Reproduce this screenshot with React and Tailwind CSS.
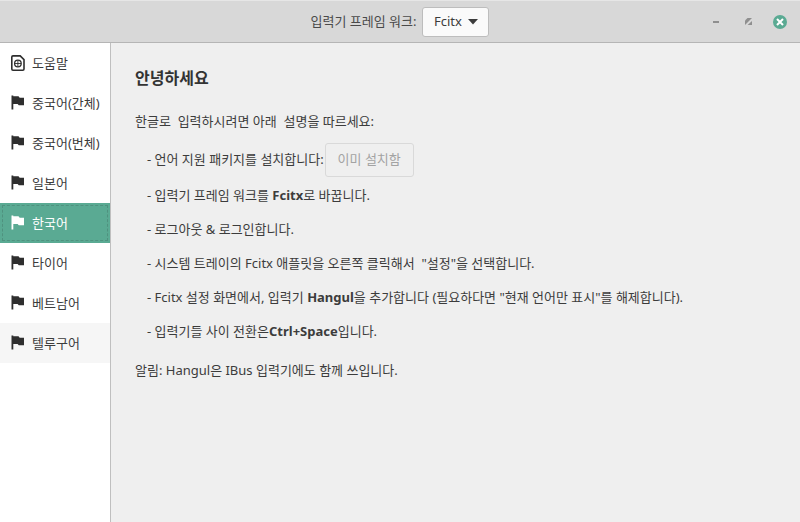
import React from "react";

const Flag = ({ color = "#2e2e2e" }) => (
  <svg width="14" height="16" viewBox="0 0 14 16" className="shrink-0">
    <path d="M0.5 0.5h1.8v0.8h5.2l1.2 1.4h4.3v7.6H7.8l-1.2-1.4H2.3V14.5H0.5z" fill={color} />
  </svg>
);

const Help = () => (
  <svg width="14" height="16" viewBox="0 0 14 16" className="shrink-0">
    <path d="M2 0.9h7.2L13 4.6V14a1.2 1.2 0 0 1-1.2 1.2H2A1.2 1.2 0 0 1 .8 14V2.1A1.2 1.2 0 0 1 2 .9z" fill="none" stroke="#2e2e2e" strokeWidth="1.6" />
    <circle cx="6.9" cy="8.5" r="3.3" fill="none" stroke="#2e2e2e" strokeWidth="1.3" />
    <path d="M3.8 8.5h6.2M6.9 5.4v6.2" stroke="#2e2e2e" strokeWidth="0.9" />
  </svg>
);

const rows = ["중국어(간체)", "중국어(번체)", "일본어", "한국어", "타이어", "베트남어", "텔루구어"];

const Row = ({ label, icon, state }) => (
  <div
    className={
      "h-10 flex items-center gap-[7px] pl-[11px] text-[13px] relative " +
      (state === "sel" ? "bg-[#5aaa93] text-white" : state === "hover" ? "bg-[#f6f6f6] text-[#3c3c3c]" : "text-[#3c3c3c]")
    }
  >
    {icon}
    <span className="relative top-[1px]">{label}</span>
    {state === "sel" && <div className="absolute inset-[2px] border border-dashed border-[#4f927f]" />}
  </div>
);

const Line = ({ children, className = "" }) => (
  <div className={"pl-3 h-[34px] flex items-center whitespace-pre " + className}>{children}</div>
);

export default function App() {
  return (
    <div
      className="w-[800px] h-[522px] flex flex-col bg-[#efefef] text-[#3c3c3c] overflow-hidden"
      style={{ fontFamily: '"Noto Sans", "Noto Sans CJK KR", sans-serif' }}
    >
      <header className="h-[43px] shrink-0 bg-[#d8d8d8] border-b border-[#b5b5b5] border-t-[#e6e6e6] border-t flex items-center relative text-[13px]">
        <div className="flex-1 flex items-center justify-center gap-[6px] pt-[1px]">
          <span className="text-[#4a4a4a]">입력기 프레임 워크:</span>
          <div className="w-[67px] h-[30px] bg-[#fafafa] border border-[#bdbdbd] rounded-[3px] flex items-center justify-center gap-[6px]">
            <span>Fcitx</span>
            <svg width="10" height="6" viewBox="0 0 10 6"><path d="M0 0h10L5 5.5z" fill="#3c3c3c" /></svg>
          </div>
        </div>
        <div className="absolute right-[13px] top-0 h-full flex items-center">
          <div className="w-[6px] h-[2px] bg-[#8f8f8f]" />
          <svg width="7" height="7" viewBox="0 0 7 7" className="ml-[26px] mr-[21px]"><path d="M0 2.5 2.5 0H7L0 7z" fill="#8f8f8f" /><path d="M7 3v4H2.6z" fill="#8f8f8f" /></svg>
          <div className="w-[14px] h-[14px] rounded-full bg-[#5aaa93] flex items-center justify-center">
            <svg width="8" height="8" viewBox="0 0 8 8"><path d="M1 1l6 6M7 1 1 7" stroke="#fff" strokeWidth="2" /></svg>
          </div>
        </div>
      </header>
      <div className="flex-1 flex min-h-0">
        <aside className="w-[111px] shrink-0 bg-white border-r border-[#bfbfbf]">
          <Row label="도움말" icon={<Help />} />
          {rows.map((r) => (
            <Row
              key={r}
              label={r}
              icon={<Flag color={r === "한국어" ? "#ffffff" : "#2e2e2e"} />}
              state={r === "한국어" ? "sel" : r === "텔루구어" ? "hover" : undefined}
            />
          ))}
        </aside>
        <main className="flex-1 pl-6 pt-[22px] text-[13px]">
          <h1 className="text-[16px] font-bold h-[26px] leading-[26px] text-[#333]">안녕하세요</h1>
          <p className="mt-[20px] h-[20px] leading-[20px] whitespace-pre">한글로  입력하시려면 아래  설명을 따르세요:</p>
          <Line className="mt-[12px] gap-[1px]">
            <span>- 언어 지원 패키지를 설치합니다:</span>
            <div className="w-[89px] h-[34px] rounded-[3px] border border-[#d9d9d9] flex items-center justify-center text-[#a3a3a3]">이미 설치함</div>
          </Line>
          <Line className="mt-[2px]"><span>- 입력기 프레임 워크를 <b>Fcitx</b>로 바꿉니다.</span></Line>
          <Line>- 로그아웃 &amp; 로그인합니다.</Line>
          <Line>- 시스템 트레이의 Fcitx 애플릿을 오른쪽 클릭해서  "설정"을 선택합니다.</Line>
          <Line><span>- Fcitx 설정 화면에서, 입력기 <b>Hangul</b>을 추가합니다 (필요하다면 "현재 언어만 표시"를 해제합니다).</span></Line>
          <Line><span>- 입력기들 사이 전환은<b>Ctrl+Space</b>입니다.</span></Line>
          <p className="mt-[11px] h-[20px] leading-[20px]">알림: Hangul은 IBus 입력기에도 함께 쓰입니다.</p>
        </main>
      </div>
    </div>
  );
}
